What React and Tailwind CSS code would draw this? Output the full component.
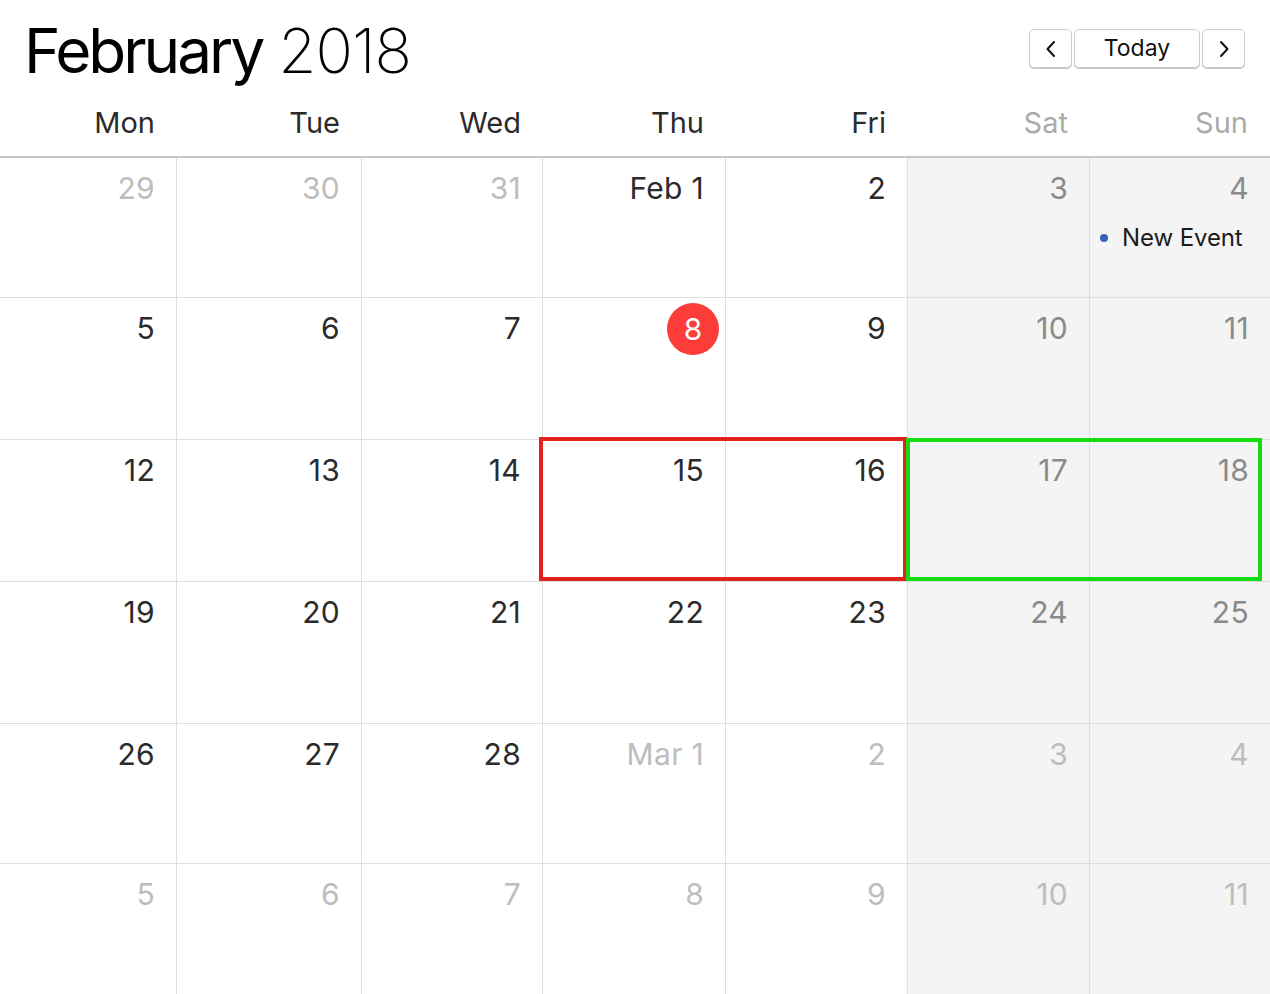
import React from "react";

const rows = [
  [
    { d: "29", o: true },
    { d: "30", o: true },
    { d: "31", o: true },
    { d: "Feb 1" },
    { d: "2" },
    { d: "3" },
    { d: "4", event: "New Event" },
  ],
  [{ d: "5" }, { d: "6" }, { d: "7" }, { d: "8", today: true }, { d: "9" }, { d: "10" }, { d: "11" }],
  [{ d: "12" }, { d: "13" }, { d: "14" }, { d: "15" }, { d: "16" }, { d: "17" }, { d: "18" }],
  [{ d: "19" }, { d: "20" }, { d: "21" }, { d: "22" }, { d: "23" }, { d: "24" }, { d: "25" }],
  [
    { d: "26" },
    { d: "27" },
    { d: "28" },
    { d: "Mar 1", o: true },
    { d: "2", o: true },
    { d: "3", o: true },
    { d: "4", o: true },
  ],
  [
    { d: "5", o: true },
    { d: "6", o: true },
    { d: "7", o: true },
    { d: "8", o: true },
    { d: "9", o: true },
    { d: "10", o: true },
    { d: "11", o: true },
  ],
];

const days = ["Mon", "Tue", "Wed", "Thu", "Fri", "Sat", "Sun"];

function Cell({ c, col }) {
  const weekend = col >= 5;
  const last = col === 6;
  const color = c.o ? "text-[#bdbdbd]" : weekend ? "text-[#8a8a8a]" : "text-[#2b2b2b]";
  return (
    <div
      className={
        "relative border-b border-[#dedede] " +
        (last ? "" : "border-r ") +
        (weekend ? "bg-[#f4f4f4]" : "bg-white")
      }
    >
      {c.today ? (
        <div className="flex justify-end pt-[5px] pr-[6px]">
          <span className="flex h-[52px] w-[52px] items-center justify-center rounded-full bg-[#fc3d39] text-[30px] leading-none text-white">
            {c.d}
          </span>
        </div>
      ) : (
        <div className={"pt-[12px] pr-[21px] text-right text-[30px] leading-[36px] tracking-[0.3px] " + color}>{c.d}</div>
      )}
      {c.event && (
        <div className="mt-[18px] flex items-center pl-[10px] text-[24px] leading-[28px] tracking-[-0.1px] text-[#1c1c1c]">
          <span className="mr-[14px] h-[8px] w-[8px] rounded-full bg-[#3565b8]"></span>
          {c.event}
        </div>
      )}
    </div>
  );
}

export default function App() {
  return (
    <div className="relative h-[994px] w-[1270px] overflow-hidden bg-white font-['Inter','Noto_Sans',sans-serif]">
      <div className="flex items-start justify-between pt-[19px]">
        <h1 className="pl-[24px] text-[62px] leading-[64px] text-black">
          <span className="font-normal tracking-[-3px]">February</span>
          <span className="ml-[16px] font-extralight tracking-[-1px]">2018</span>
        </h1>
        <div className="mt-[10px] mr-[25px] flex gap-[2px]">
          <button className="flex h-[39px] w-[43px] items-center justify-center rounded-[5px] border border-[#cfcfcf] bg-white shadow-[0_1px_0_#c4c4c4]">
            <svg width="12" height="18" viewBox="0 0 12 18" fill="none">
              <polyline points="9,2 2.5,9 9,16" stroke="#111" strokeWidth="2" strokeLinecap="round" strokeLinejoin="round" />
            </svg>
          </button>
          <button className="flex h-[39px] w-[126px] items-center justify-center rounded-[5px] border border-[#cfcfcf] bg-white text-[23px] text-[#111] shadow-[0_1px_0_#c4c4c4]">
            Today
          </button>
          <button className="flex h-[39px] w-[43px] items-center justify-center rounded-[5px] border border-[#cfcfcf] bg-white shadow-[0_1px_0_#c4c4c4]">
            <svg width="12" height="18" viewBox="0 0 12 18" fill="none">
              <polyline points="3,2 9.5,9 3,16" stroke="#111" strokeWidth="2" strokeLinecap="round" strokeLinejoin="round" />
            </svg>
          </button>
        </div>
      </div>

      <div className="grid grid-cols-[177px_185px_181px_183px_182px_182px_1fr] border-b-2 border-[#c8c8c8] pt-[25px] pb-[19px]">
        {days.map((d, i) => (
          <div
            key={d}
            className={
              "pr-[22px] text-right text-[29px] leading-[29px] " +
              (i >= 5 ? "text-[#ababab]" : "text-[#2b2b2b]")
            }
          >
            {d}
          </div>
        ))}
      </div>

      <div className="relative grid grid-cols-[177px_185px_181px_183px_182px_182px_1fr] grid-rows-[140px_142px_142px_142px_140px_140px]">
        {rows.map((r, ri) =>
          r.map((c, ci) => <Cell key={ri + "-" + ci} c={c} col={ci} />)
        )}
        <div className="pointer-events-none absolute left-[539px] top-[279px] h-[144px] w-[368px] border-4 border-[#e3231b]"></div>
        <div className="pointer-events-none absolute left-[906px] top-[280px] h-[143px] w-[356px] border-4 border-[#10dc10]"></div>
      </div>
    </div>
  );
}
